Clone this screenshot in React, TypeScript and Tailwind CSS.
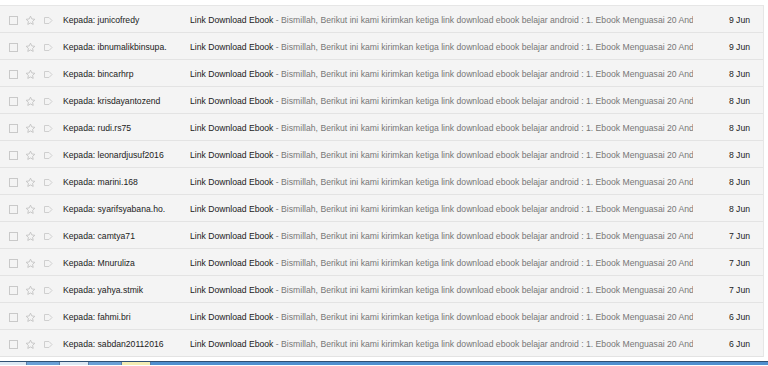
import React from "react";

const rows: { to: string; date: string }[] = [
  { to: "junicofredy", date: "9 Jun" },
  { to: "ibnumalikbinsupa.", date: "9 Jun" },
  { to: "bincarhrp", date: "8 Jun" },
  { to: "krisdayantozend", date: "8 Jun" },
  { to: "rudi.rs75", date: "8 Jun" },
  { to: "leonardjusuf2016", date: "8 Jun" },
  { to: "marini.168", date: "8 Jun" },
  { to: "syarifsyabana.ho.", date: "8 Jun" },
  { to: "camtya71", date: "7 Jun" },
  { to: "Mnuruliza", date: "7 Jun" },
  { to: "yahya.stmik", date: "7 Jun" },
  { to: "fahmi.bri", date: "6 Jun" },
  { to: "sabdan20112016", date: "6 Jun" },
];

const Star = () => (
  <svg width="11" height="11" viewBox="0 0 24 24" fill="none" stroke="#c4c4c4" strokeWidth="2" strokeLinejoin="round">
    <path d="M12 2.5l2.9 6.1 6.6.8-4.9 4.6 1.3 6.6L12 17.3l-5.9 3.3 1.3-6.6-4.9-4.6 6.6-.8z" />
  </svg>
);

const Tag = () => (
  <svg width="10" height="9" viewBox="0 0 10 9" fill="none" stroke="#cfcfcf" strokeWidth="1">
    <path d="M1.5 1.5h4.5l3 3-3 3H1.5z" strokeLinejoin="round" />
  </svg>
);

function Row({ to, date }: { to: string; date: string }) {
  return (
    <div className="flex h-[27px] items-center border-b border-[#e3e3e3] bg-[#f4f4f4] pt-[3px]">
      <div className="ml-[9px] h-[9px] w-[9px] shrink-0 border border-[#c9c9c9]" />
      <div className="ml-[7px] flex w-[11px] shrink-0 items-center">
        <Star />
      </div>
      <div className="ml-[7px] flex w-[10px] shrink-0 items-center">
        <Tag />
      </div>
      <div className="ml-[10px] w-[127px] shrink-0 overflow-hidden whitespace-nowrap text-[#222222]">
        Kepada: {to}
      </div>
      <div className="w-[503px] shrink-0 overflow-hidden whitespace-nowrap">
        <span className="text-[#222222]">Link Download Ebook</span>
        <span className="text-[#777777]">
          {" "}- Bismillah, Berikut ini kami kirimkan ketiga link download ebook belajar android : 1. Ebook Menguasai 20 And
        </span>
      </div>
      <div className="w-[57px] shrink-0 text-right text-[#222222]">{date}</div>
    </div>
  );
}

export default function App() {
  return (
    <div className="relative h-[366px] w-[768px] overflow-hidden bg-white font-['Liberation_Sans',Arial,sans-serif] text-[8.65px]">
      <div className="h-[5px] bg-white" />
      <div className="w-[764px] border-r border-t border-[#e6e6e6]">
        {rows.map((r) => (
          <Row key={r.to} to={r.to} date={r.date} />
        ))}
      </div>
      <div className="h-[4px]" />
      <div className="flex h-[4px] border-t border-[#2f4f73]">
        <div className="w-[27px] border-r border-[#5a7ea6] bg-[#dce8f3]" />
        <div className="w-[33px] border-r border-[#5a7ea6] bg-[#6aa0d6]" />
        <div className="w-[29px] border-r border-[#5a7ea6] bg-[#dce8f3]" />
        <div className="w-[33px] border-r border-[#5a7ea6] bg-[#6aa0d6]" />
        <div className="w-[29px] border-r border-[#5a7ea6] bg-[#f3edb3]" />
        <div className="flex-1 bg-[#4f8fcf]" />
      </div>
    </div>
  );
}
